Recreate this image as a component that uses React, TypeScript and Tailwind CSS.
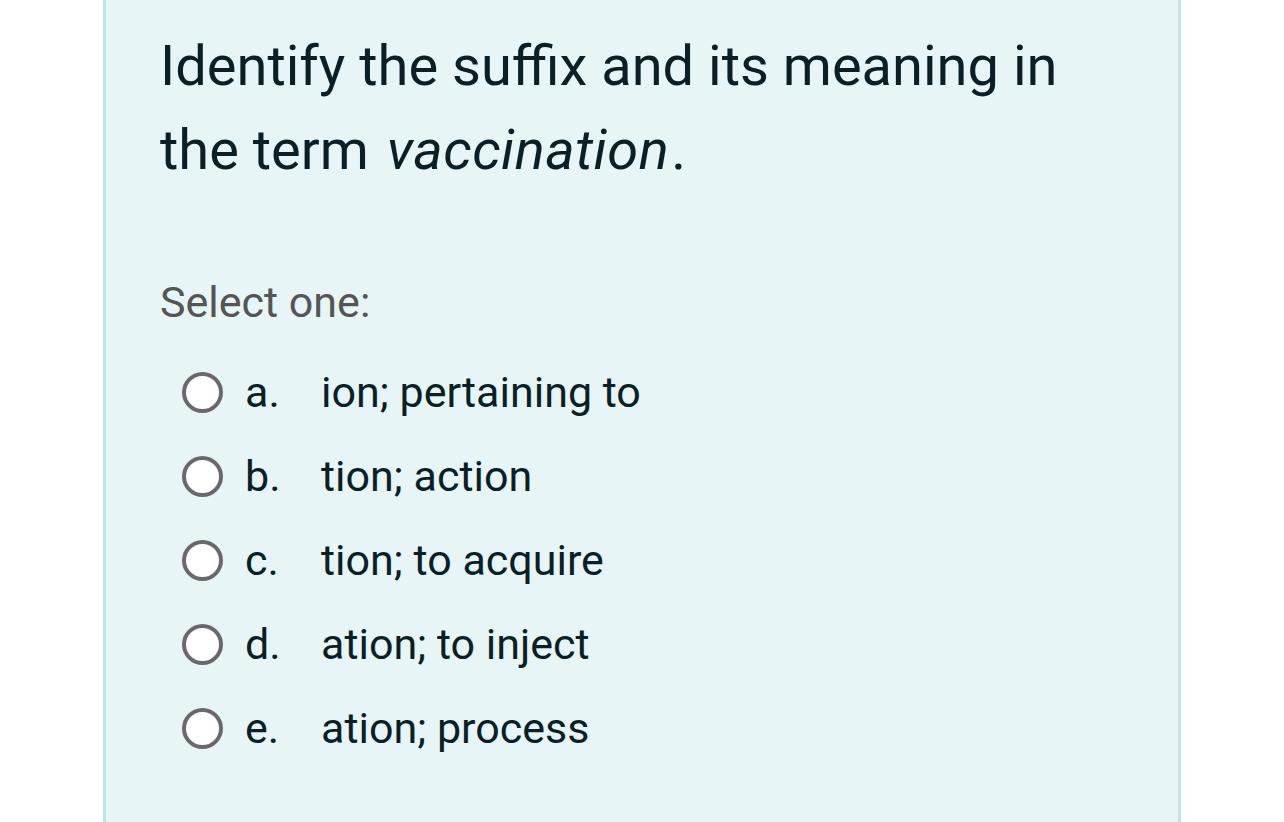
const options = [
  { letter: 'a.', text: 'ion; pertaining to' },
  { letter: 'b.', text: 'tion; action' },
  { letter: 'c.', text: 'tion; to acquire' },
  { letter: 'd.', text: 'ation; to inject' },
  { letter: 'e.', text: 'ation; process' },
];

export default function App() {
  return (
    <div className="w-[1284px] h-[822px] overflow-hidden bg-white font-['Roboto',_'Liberation_Sans',_sans-serif]">
      <div className="ml-[103px] w-[1078px] h-[822px] border-x-[3px] border-[#bde5ec] bg-[#e7f5f7] pl-[54px] pt-[24px]">
        <h1 className="text-[56px] leading-[84px] text-[#0b1f26] font-normal w-[960px]">
          Identify the suffix and its meaning in the term{' '}
          <em className="ml-[4px] tracking-[0.5px] pr-[2px]">vaccination</em>.
        </h1>
        <div className="mt-[80px] text-[43px] leading-[60px] text-[#555555]">Select one:</div>
        <div className="mt-[18px] flex flex-col">
          {options.map((o) => (
            <div key={o.letter} className="flex items-center h-[84px] text-[#0b1f26]">
              <span className="ml-[22px] w-[41px] h-[41px] rounded-full border-[4px] border-[#6b686d] bg-white" />
              <span className="ml-[22px] w-[76px] text-[43px]">{o.letter}</span>
              <span className="text-[43px]">{o.text}</span>
            </div>
          ))}
        </div>
      </div>
    </div>
  );
}
